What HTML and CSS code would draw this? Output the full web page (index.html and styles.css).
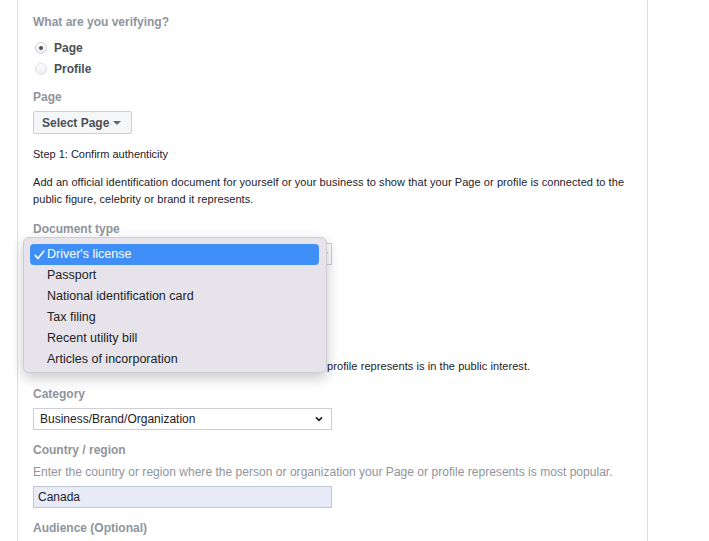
FILE: index.html
```html
<!DOCTYPE html>
<html lang="en">
<head>
<meta charset="utf-8">
<title>Verification request</title>
<link rel="stylesheet" href="styles.css">
</head>
<body>
<div class="page">
  <div class="label first">What are you verifying?</div>
  <div class="radios">
    <div class="radio-row"><span class="radio checked"></span><span class="radio-text">Page</span></div>
    <div class="radio-row"><span class="radio"></span><span class="radio-text">Profile</span></div>
  </div>

  <div class="label page-label">Page</div>
  <div class="btn-row">
    <button class="select-btn" type="button">Select Page <span class="tri"></span></button>
  </div>

  <div class="step">Step 1: Confirm authenticity</div>
  <p class="para">Add an official identification document for yourself or your business to show that your Page or profile is connected to the public figure, celebrity or brand it represents.</p>

  <div class="label doc-label">Document type</div>
  <div class="field select-field doc-select">
    <span class="field-text">Driver's license</span>
    <svg class="chev" width="8" height="6" viewBox="0 0 8 6"><path d="M1 1.3 L4 4.3 L7 1.3" fill="none" stroke="#1d2129" stroke-width="1.8"/></svg>
  </div>
  <div class="upload-row"><button class="upload-btn" type="button">Choose Files</button></div>
  <div class="step step2">Step 2: Confirm notability</div>
  <p class="para notable">Show that the public figure, celebrity or brand your Page or profile represents is in the public interest.</p>

  <div class="label cat-label">Category</div>
  <div class="field select-field">
    <span class="field-text">Business/Brand/Organization</span>
    <svg class="chev" width="8" height="6" viewBox="0 0 8 6"><path d="M1 1.3 L4 4.3 L7 1.3" fill="none" stroke="#1d2129" stroke-width="1.8"/></svg>
  </div>

  <div class="label country-label">Country / region</div>
  <div class="hint">Enter the country or region where the person or organization your Page or profile represents is most popular.</div>
  <div class="field input-field">Canada</div>

  <div class="label aud-label">Audience (Optional)</div>

  <ul class="menu">
    <li class="menu-item active">
      <svg class="check" width="11" height="10" viewBox="0 0 11 10"><path d="M1.2 5.4 L4 8.4 L9.8 1.2" fill="none" stroke="#ffffff" stroke-width="1.6" stroke-linecap="round" stroke-linejoin="round"/></svg>
      Driver's license
    </li>
    <li class="menu-item">Passport</li>
    <li class="menu-item">National identification card</li>
    <li class="menu-item">Tax filing</li>
    <li class="menu-item">Recent utility bill</li>
    <li class="menu-item">Articles of incorporation</li>
  </ul>
</div>
</body>
</html>
```

FILE: styles.css
```css
html, body {
  margin: 0;
  padding: 0;
  background: #ffffff;
}

body {
  font-family: "Liberation Sans", Arial, Helvetica, sans-serif;
  color: #1d2129;
  height: 541px;
  overflow: hidden;
}

.page {
  position: relative;
  margin-left: 17px;
  width: 599px;
  min-height: 541px;
  border-left: 1px solid #dddfe2;
  border-right: 1px solid #dddfe2;
  padding: 14px 15px 0 15px;
  box-sizing: content-box;
}

.label {
  font-size: 12px;
  font-weight: bold;
  line-height: 16px;
  color: #90949c;
}

.radios {
  margin-top: 7px;
}

.radio-row {
  display: flex;
  align-items: center;
  height: 21px;
}

.radio {
  width: 12px;
  height: 12px;
  margin-left: 2px;
  border-radius: 50%;
  border: 1px solid #dcdee2;
  background: linear-gradient(#ffffff, #eceef1);
  box-sizing: border-box;
  position: relative;
}

.radio.checked {
  border-color: #cfd2d7;
}

.radio.checked::after {
  content: "";
  position: absolute;
  left: 3px;
  top: 3px;
  width: 4px;
  height: 4px;
  border-radius: 50%;
  background: #4b4f56;
}

.radio-text {
  margin-left: 7px;
  font-size: 12px;
  font-weight: bold;
  color: #4b4f56;
}

.page-label {
  margin-top: 10px;
}

.btn-row {
  margin-top: 6px;
  display: flex;
}

.select-btn {
  font-family: inherit;
  font-size: 12px;
  font-weight: bold;
  color: #4b4f56;
  background: #f5f6f7;
  border: 1px solid #ccd0d5;
  border-radius: 2px;
  height: 23px;
  padding: 0 10px 0 8px;
  display: flex;
  align-items: center;
  gap: 4px;
}

.tri {
  display: inline-block;
  width: 0;
  height: 0;
  border-left: 4px solid transparent;
  border-right: 4px solid transparent;
  border-top: 4px solid #606770;
  margin-top: 1px;
}

.step {
  margin-top: 13px;
  font-size: 11px;
  line-height: 14px;
}

.para {
  margin: 13px 0 0 0;
  font-size: 11px;
  line-height: 17px;
  letter-spacing: 0.07px;
}

.doc-label {
  margin-top: 13px;
}

.field {
  width: 299px;
  height: 22px;
  box-sizing: border-box;
  border: 1px solid #ccd0d5;
  font-size: 12px;
  display: flex;
  align-items: center;
}

.select-field {
  margin-top: 6px;
  background: #ffffff;
  padding: 0 8px 0 6px;
  justify-content: space-between;
}

.doc-select {
  margin-top: 6px;
  padding-right: 3px;
}

.upload-row {
  margin-top: 8px;
  display: flex;
}

.upload-btn {
  font-family: inherit;
  font-size: 12px;
  font-weight: bold;
  color: #4b4f56;
  background: #f5f6f7;
  border: 1px solid #ccd0d5;
  border-radius: 2px;
  height: 24px;
  padding: 0 10px;
}

.step2 {
  margin-top: 34px;
}

.notable {
  margin-top: 14px;
  line-height: 14px;
}

.cat-label {
  margin-top: 13px;
}

.country-label {
  margin-top: 12px;
}

.hint {
  margin-top: 7px;
  font-size: 12px;
  line-height: 14px;
  color: #90949c;
  letter-spacing: 0.03px;
}

.input-field {
  margin-top: 7px;
  background: #e8ebf8;
  border-color: #bfc6d6;
  padding-left: 4px;
  color: #1d2129;
}

.aud-label {
  margin-top: 12px;
}

/* popup menu over the document type select */
.menu {
  position: absolute;
  left: 5px;
  top: 237px;
  width: 304px;
  height: 136px;
  box-sizing: border-box;
  margin: 0;
  padding: 6px 7px 4px 6px;
  list-style: none;
  background: #e6e4ea;
  border: 1px solid #cfcdd3;
  border-radius: 6px;
  box-shadow: 0 5px 14px rgba(0, 0, 0, 0.22);
}

.menu-item {
  position: relative;
  height: 21px;
  line-height: 21px;
  padding-left: 17px;
  font-size: 12.5px;
  color: #222222;
  border-radius: 4px;
}

.menu-item.active {
  background: #3f8ff6;
  color: #ffffff;
}

.check {
  position: absolute;
  left: 4px;
  top: 6px;
}
```
